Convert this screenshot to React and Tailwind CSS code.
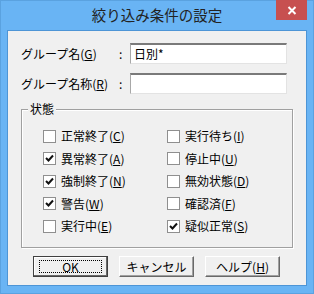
import React from 'react'

const font = { fontFamily: '"Noto Sans CJK JP", "Liberation Sans", sans-serif' }

const leftItems = [
  { label: '正常終了', key: 'C', checked: false },
  { label: '異常終了', key: 'A', checked: true },
  { label: '強制終了', key: 'N', checked: true },
  { label: '警告', key: 'W', checked: true },
  { label: '実行中', key: 'E', checked: false },
]

const rightItems = [
  { label: '実行待ち', key: 'I', checked: false },
  { label: '停止中', key: 'U', checked: false },
  { label: '無効状態', key: 'D', checked: false },
  { label: '確認済', key: 'F', checked: false },
  { label: '疑似正常', key: 'S', checked: true },
]

function Label({ text, k }) {
  return (
    <span className="whitespace-nowrap">
      {text}(<u>{k}</u>)
    </span>
  )
}

function Check({ label, k, checked }) {
  return (
    <div className="flex items-center h-[22.5px]">
      <div className="w-[13px] h-[13px] border border-[#8f8f8f] bg-white flex items-center justify-center shrink-0">
        {checked && (
          <svg width="9" height="9" viewBox="0 0 9 9">
            <path d="M1 4 L3.5 6.5 L8 1.5" stroke="#111" strokeWidth="2" fill="none" />
          </svg>
        )}
      </div>
      <div className="ml-[5px]">
        <Label text={label} k={k} />
      </div>
    </div>
  )
}

function Field({ value }) {
  return (
    <div className="w-[157px] h-[21px] bg-white border-t-2 border-l border-b border-r border-t-[#7a7a7a] border-l-[#a8a8a8] border-b-[#e3e3e3] border-r-[#e3e3e3] flex items-center px-[3px] text-[12px] text-black">
      {value}
    </div>
  )
}

function Btn({ children, primary }) {
  return (
    <div
      className={`w-[75px] h-[21px] bg-[#f0f0f0] flex items-center justify-center ${
        primary
          ? 'border border-[#404040] shadow-[inset_-1px_-1px_0_#696969,inset_1px_1px_0_#fff]'
          : 'border border-t-white border-l-white border-b-[#696969] border-r-[#696969] shadow-[inset_-1px_-1px_0_#a0a0a0]'
      }`}
    >
      {primary ? (
        <div className="w-[63px] h-[13px] border border-dotted border-black flex items-center justify-center leading-none">
          {children}
        </div>
      ) : (
        children
      )}
    </div>
  )
}

export default function App() {
  return (
    <div className="w-[314px] h-[294px] bg-[#69b4f4] border border-[#5aa2e0] flex flex-col text-[12px] text-black" style={font}>
      {/* Title bar */}
      <div className="relative h-[29px] flex items-center justify-center">
        <span className="text-[14.5px] text-[#222] mt-[-2px]">絞り込み条件の設定</span>
        <div className="absolute top-[-1px] right-[6px] w-[31px] h-[20px] bg-[#c75050] flex items-center justify-center">
          <svg width="10" height="9" viewBox="0 0 10 9">
            <path d="M1.5 1 L8.5 8 M8.5 1 L1.5 8" stroke="#fff" strokeWidth="2" />
          </svg>
        </div>
      </div>

      {/* Client area */}
      <div className="mx-[6px] h-[256px] bg-[#f0f0f0] border border-[#4d95d6] pt-[12px] pl-[13px]">
        <div className="flex items-center h-[21px]">
          <div className="w-[98px]">
            <Label text="グループ名" k="G" />
          </div>
          <div className="w-[11px]">:</div>
          <Field value="日別*" />
        </div>
        <div className="flex items-center h-[21px] mt-[9px]">
          <div className="w-[98px]">
            <Label text="グループ名称" k="R" />
          </div>
          <div className="w-[11px]">:</div>
          <Field value="" />
        </div>

        {/* Group box */}
        <div className="relative mt-[15px] w-[272px] h-[139px] border border-[#a0a0a0] shadow-[1px_1px_0_#fff,inset_1px_1px_0_#fff] pt-[15px] pl-[21px] flex">
          <div className="absolute top-[-9px] left-[6px] px-[2px] bg-[#f0f0f0] leading-[16px]">状態</div>
          <div className="w-[124px]">
            {leftItems.map((i) => (
              <Check key={i.label} label={i.label} k={i.key} checked={i.checked} />
            ))}
          </div>
          <div>
            {rightItems.map((i) => (
              <Check key={i.label} label={i.label} k={i.key} checked={i.checked} />
            ))}
          </div>
        </div>

        {/* Buttons */}
        <div className="flex mt-[8px] ml-[12px] gap-[11px]">
          <Btn primary>OK</Btn>
          <Btn>キャンセル</Btn>
          <Btn>
            <Label text="ヘルプ" k="H" />
          </Btn>
        </div>
      </div>
    </div>
  )
}
